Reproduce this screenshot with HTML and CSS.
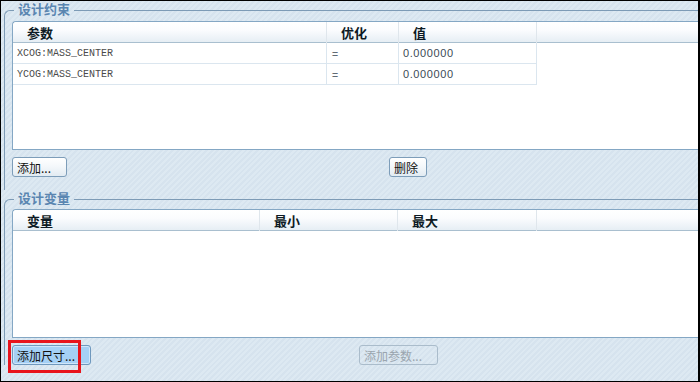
FILE: index.html
```html
<!DOCTYPE html>
<html lang="zh">
<head>
    <meta charset="UTF-8">
    <title>设计约束</title>
    <link rel="stylesheet" href="styles.css">
</head>
<body>
    <div class="window">
        <fieldset class="group group-top">
            <legend>设计约束</legend>
            <div class="panel">
                <div class="grid cons-cols head">
                    <div class="hcell">参数</div>
                    <div class="hcell">优化</div>
                    <div class="hcell">值</div>
                </div>
                <div class="grid cons-cols row">
                    <div class="cell mono">XCOG:MASS_CENTER</div>
                    <div class="cell eq">=</div>
                    <div class="cell num">0.000000</div>
                </div>
                <div class="grid cons-cols row">
                    <div class="cell mono">YCOG:MASS_CENTER</div>
                    <div class="cell eq">=</div>
                    <div class="cell num">0.000000</div>
                </div>
            </div>
            <div class="buttons">
                <button class="btn w-add">添加...</button>
                <button class="btn w-del">删除</button>
            </div>
        </fieldset>

        <fieldset class="group group-bottom">
            <legend>设计变量</legend>
            <div class="panel">
                <div class="grid var-cols head">
                    <div class="hcell">变量</div>
                    <div class="hcell">最小</div>
                    <div class="hcell">最大</div>
                </div>
            </div>
            <div class="buttons buttons-var">
                <span class="focus-wrap">
                    <button class="btn btn-active w-dim">添加尺寸...</button>
                    <span class="highlight"></span>
                </span>
                <button class="btn btn-disabled w-par" disabled>添加参数...</button>
            </div>
        </fieldset>
    </div>
</body>
</html>
```

FILE: styles.css
```css
body {
    margin: 0;
    font-family: "Noto Sans CJK SC", "Noto Sans", sans-serif;
    font-size: 12px;
}
.window {
    width: 700px;
    height: 382px;
    box-sizing: border-box;
    border: 1px solid #000;
    border-right-width: 2px;
    overflow: hidden;
    background-color: #dae6f0;
    background-image: repeating-linear-gradient(135deg, #dde9f2 0, #dde9f2 2px, #d6e3ee 2px, #d6e3ee 4px);
}
.group {
    margin: 0 0 0 3px;
    padding: 0 0 0 7px;
    width: 760px;
    border: 1px solid #7d9bb6;
    border-right: none;
    border-bottom: none;
    border-top-left-radius: 6px;
}
.group legend {
    margin-left: 2px;
    padding: 0 4px;
    height: 18px;
    line-height: 16px;
    font-size: 13px;
    font-weight: bold;
    color: #5a86b1;
}
.group-top {
    height: 186px;
    padding-top: 2px;
}
.group-bottom {
    padding-top: 1px;
}
.panel {
    width: 740px;
    height: 127px;
    background: #fff;
    border: 1px solid #84a7c4;
    border-right: none;
    border-top-left-radius: 4px;
}
.grid {
    display: grid;
}
.cons-cols {
    grid-template-columns: 314px 72px 138px;
}
.var-cols {
    grid-template-columns: 247px 138px 139px 1fr;
}
.cons-cols.head {
    grid-template-columns: 314px 72px 138px 1fr;
}
.head {
    height: 20px;
    border-bottom: 1px solid #a9bfcf;
    background: linear-gradient(#ffffff, #fbfcfe 40%, #e6eef4);
    border-top-left-radius: 4px;
}
.hcell {
    padding-left: 14px;
    line-height: 21px;
    font-weight: bold;
    font-size: 13px;
    color: #0d1a24;
    border-right: 1px solid #dfe6ec;
}
.row {
    width: 524px;
    height: 20px;
    border-bottom: 1px solid #dbe6ef;
}
.cell {
    line-height: 21px;
    border-right: 1px solid #dbe6ef;
    color: #3c4a56;
}
.mono {
    font-family: "Liberation Mono", monospace;
    font-size: 10px;
    padding-left: 4px;
    color: #4a4a4a;
}
.eq {
    padding-left: 5px;
    font-size: 11px;
}
.num {
    padding-left: 4px;
    font-family: "Liberation Sans", sans-serif;
    font-size: 11px;
    letter-spacing: 0.6px;
}
.buttons {
    display: flex;
    align-items: center;
    margin-top: 7px;
    height: 20px;
}
.btn {
    box-sizing: border-box;
    height: 20px;
    padding: 0;
    border: 1px solid #7d9db9;
    border-radius: 3px;
    background: linear-gradient(#ffffff, #f3f7fa 50%, #e2ebf2);
    font-family: "Noto Sans CJK SC", sans-serif;
    font-size: 12px;
    line-height: 17px;
    color: #111;
    text-align: left;
    padding-left: 4px;
}
.w-add { width: 55px; }
.w-del { width: 38px; margin-left: 322px; }
.w-dim { width: 79px; }
.w-par { width: 79px; margin-left: 268px; }
.btn-active {
    background: #a5d0f5;
    border-color: #6f98bd;
    box-shadow: inset 0 0 0 1px #cfe6fa;
}
.btn-disabled {
    background: transparent;
    border-color: #aabccb;
    color: #9aa5ae;
}
.focus-wrap {
    position: relative;
    display: inline-block;
    height: 20px;
}
.highlight {
    position: absolute;
    left: -4px;
    top: -5px;
    width: 73px;
    height: 33px;
    box-sizing: border-box;
    border: 3px solid #e8141c;
}
```
